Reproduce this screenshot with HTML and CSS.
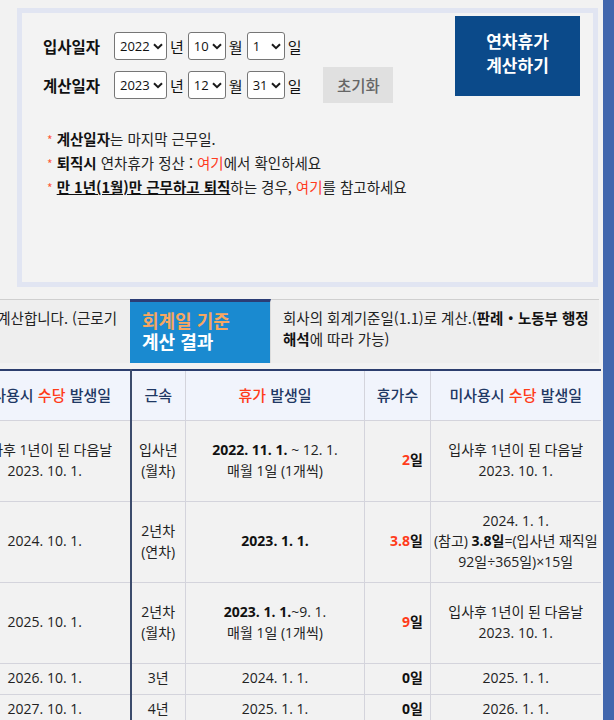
FILE: index.html
```html
<!DOCTYPE html>
<html lang="ko">
<head>
<meta charset="utf-8">
<title>연차휴가 계산기</title>
<link rel="stylesheet" href="styles.css">
</head>
<body>
<div class="main">
  <section class="panel">
    <div class="panel-top">
      <div class="form">
        <div class="row">
          <span class="label">입사일자</span>
          <span class="sel-wrap sel-year"><select class="sel"><option>2022</option></select><svg class="chev" width="10" height="7" viewBox="0 0 10 7"><path d="M1 1.2 L5 5.2 L9 1.2" fill="none" stroke="#1a1a1a" stroke-width="2"/></svg></span><span class="unit">년</span>
          <span class="sel-wrap sel-small"><select class="sel"><option>10</option></select><svg class="chev" width="10" height="7" viewBox="0 0 10 7"><path d="M1 1.2 L5 5.2 L9 1.2" fill="none" stroke="#1a1a1a" stroke-width="2"/></svg></span><span class="unit">월</span>
          <span class="sel-wrap sel-small"><select class="sel"><option>1</option></select><svg class="chev" width="10" height="7" viewBox="0 0 10 7"><path d="M1 1.2 L5 5.2 L9 1.2" fill="none" stroke="#1a1a1a" stroke-width="2"/></svg></span><span class="unit">일</span>
        </div>
        <div class="row">
          <span class="label">계산일자</span>
          <span class="sel-wrap sel-year"><select class="sel"><option>2023</option></select><svg class="chev" width="10" height="7" viewBox="0 0 10 7"><path d="M1 1.2 L5 5.2 L9 1.2" fill="none" stroke="#1a1a1a" stroke-width="2"/></svg></span><span class="unit">년</span>
          <span class="sel-wrap sel-small"><select class="sel"><option>12</option></select><svg class="chev" width="10" height="7" viewBox="0 0 10 7"><path d="M1 1.2 L5 5.2 L9 1.2" fill="none" stroke="#1a1a1a" stroke-width="2"/></svg></span><span class="unit">월</span>
          <span class="sel-wrap sel-small"><select class="sel"><option>31</option></select><svg class="chev" width="10" height="7" viewBox="0 0 10 7"><path d="M1 1.2 L5 5.2 L9 1.2" fill="none" stroke="#1a1a1a" stroke-width="2"/></svg></span><span class="unit">일</span>
          <button class="reset">초기화</button>
        </div>
      </div>
      <button class="calc-btn">연차휴가<br>계산하기</button>
    </div>
    <ul class="notes">
      <li><span class="star">*</span> <b>계산일자</b>는 마지막 근무일.</li>
      <li><span class="star">*</span> <b>퇴직시</b> 연차휴가 정산 : <span class="link">여기</span>에서 확인하세요</li>
      <li><span class="star">*</span> <b class="ul">만 1년(1월)만 근무하고 퇴직</b>하는 경우, <span class="link">여기</span>를 참고하세요</li>
    </ul>
  </section>

  <div class="tabs">
    <div class="tab-left"><span>입사일 기준으로 계산합니다. (근로기</span></div>
    <div class="tab-active"><span class="orange">회계일 기준</span><br>계산 결과</div>
    <div class="tab-right">회사의 회계기준일(1.1)로 계산.(<b>판례・노동부 행정<br>해석</b>에 따라 가능)</div>
  </div>

  <table class="result">
    <colgroup>
      <col class="c1"><col class="c2"><col class="c3"><col class="c4"><col class="c5">
    </colgroup>
    <thead>
      <tr>
        <th class="thick">미사용시 <span class="red">수당</span> 발생일</th>
        <th>근속</th>
        <th><span class="red">휴가</span> 발생일</th>
        <th>휴가수</th>
        <th>미사용시 <span class="red">수당</span> 발생일</th>
      </tr>
    </thead>
    <tbody>
      <tr class="tall">
        <td class="thick">입사후 1년이 된 다음날<br>2023. 10. 1.</td>
        <td>입사년<br>(월차)</td>
        <td><b>2022. 11. 1.</b> ~ 12. 1.<br>매월 1일 (1개씩)</td>
        <td class="num"><span class="red">2</span>일</td>
        <td>입사후 1년이 된 다음날<br>2023. 10. 1.</td>
      </tr>
      <tr class="tall">
        <td class="thick">2024. 10. 1.</td>
        <td>2년차<br>(연차)</td>
        <td><b>2023. 1. 1.</b></td>
        <td class="num"><span class="red">3.8</span>일</td>
        <td class="tight">2024. 1. 1.<br>(참고) <b>3.8일</b>=(입사년 재직일<br>92일÷365일)×15일</td>
      </tr>
      <tr class="tall">
        <td class="thick">2025. 10. 1.</td>
        <td>2년차<br>(월차)</td>
        <td><b>2023. 1. 1.</b>~9. 1.<br>매월 1일 (1개씩)</td>
        <td class="num"><span class="red">9</span>일</td>
        <td>입사후 1년이 된 다음날<br>2023. 10. 1.</td>
      </tr>
      <tr class="short">
        <td class="thick">2026. 10. 1.</td>
        <td>3년</td>
        <td>2024. 1. 1.</td>
        <td class="num">0일</td>
        <td>2025. 1. 1.</td>
      </tr>
      <tr class="short">
        <td class="thick">2027. 10. 1.</td>
        <td>4년</td>
        <td>2025. 1. 1.</td>
        <td class="num">0일</td>
        <td>2026. 1. 1.</td>
      </tr>
    </tbody>
  </table>
</div>
<div class="sidebar"></div>
</body>
</html>
```

FILE: styles.css
```css
* { box-sizing: border-box; }

html, body {
  margin: 0;
  padding: 0;
  height: 720px;
  overflow: hidden;
}

body {
  display: flex;
  background: #f2f2f2;
  font-family: "Open Sans", "Noto Sans CJK KR", sans-serif;
  color: #222;
}

.main {
  width: 603px;
  flex: none;
  overflow: hidden;
  padding-top: 8px;
}

.sidebar {
  width: 11px;
  flex: none;
  background: #4267ad;
}

/* ---------- top panel ---------- */
.panel {
  margin-left: 17px;
  width: 581px;
  height: 279px;
  border: 5px solid #e1e5f2;
  background: #f3f3f3;
}

.panel-top {
  display: flex;
  justify-content: space-between;
  align-items: flex-start;
}

.form {
  padding-left: 21px;
  padding-top: 19px;
}

.row {
  display: flex;
  align-items: center;
  height: 28px;
}

.row + .row { margin-top: 11px; }

.label {
  width: 71px;
  font-family: "Noto Sans CJK KR", sans-serif;
  font-weight: 700;
  font-size: 15.5px;
  color: #111;
}

.sel-wrap {
  position: relative;
  display: inline-flex;
  height: 28px;
  flex: none;
}

.sel-year { width: 53px; }
.sel-small { width: 38px; }

.sel {
  -webkit-appearance: none;
  appearance: none;
  width: 100%;
  height: 28px;
  margin: 0;
  padding: 0 0 0 5px;
  font-family: "Open Sans", "Noto Sans CJK KR", sans-serif;
  font-size: 13px;
  color: #111;
  background: #fff;
  border: 1px solid #767676;
  border-radius: 3px;
}

.chev {
  position: absolute;
  right: 4px;
  top: 11px;
  pointer-events: none;
}

.unit {
  margin: 0 4px 0 3px;
  font-family: "Noto Sans CJK KR", sans-serif;
  font-size: 15px;
  color: #111;
}

.reset {
  margin-left: 18px;
  width: 70px;
  height: 36px;
  flex: none;
  border: none;
  background: #e0e0e0;
  color: #666;
  font-family: "Noto Sans CJK KR", sans-serif;
  font-size: 15.5px;
  font-weight: 500;
  padding: 0;
}

.calc-btn {
  margin-top: 3px;
  margin-right: 13px;
  width: 125px;
  height: 80px;
  border: none;
  background: #0b4a8a;
  color: #fff;
  font-family: "Noto Sans CJK KR", sans-serif;
  font-weight: 700;
  font-size: 17px;
  line-height: 24px;
  padding: 0 0 7px;
}

.notes {
  list-style: none;
  margin: 28px 0 0;
  padding: 0 0 0 25px;
  font-family: "Noto Sans CJK KR", sans-serif;
  font-size: 14.5px;
  line-height: 23px;
  color: #222;
}

.notes b { color: #111; }
.star { color: #ff5a3c; font-size: 12px; }
.link { color: #ff3c1e; }
.ul { text-decoration: underline; }

/* ---------- tabs ---------- */
.tabs {
  margin-top: 12px;
  width: 599px;
  height: 64px;
  display: flex;
  background: #eeeeee;
  border-top: 1px solid #cfcfcf;
  font-family: "Noto Sans CJK KR", sans-serif;
  font-size: 14.5px;
  line-height: 21px;
}

.tab-left {
  width: 130px;
  flex: none;
  display: flex;
  justify-content: flex-end;
  padding: 7px 13px 0 0;
  white-space: nowrap;
  color: #222;
}

.tab-active {
  width: 141px;
  flex: none;
  margin-top: -1px;
  height: 64px;
  background: #1a8ad0;
  border-top: 3px solid #2b3d75;
  border-right: 1px solid #dcdcdc;
  padding: 8px 0 0 12px;
  color: #fff;
  font-weight: 700;
  font-size: 18px;
  line-height: 21px;
}

.orange { color: #f7a760; }

.tab-right {
  flex: 1;
  padding: 7px 0 0 12px;
  color: #222;
  white-space: nowrap;
}

.tab-right b { color: #111; }

/* ---------- table ---------- */
.result {
  margin-top: 6px;
  margin-left: -41px;
  width: 641px;
  border-collapse: collapse;
  table-layout: fixed;
  border-top: 2px solid #2c3e6e;
  font-size: 14px;
  line-height: 20.5px;
}

.c1 { width: 171px; }
.c2 { width: 55px; }
.c3 { width: 179px; }
.c4 { width: 66px; }
.c5 { width: 170px; }

th, td {
  border: 1px solid #d4d4dc;
  text-align: center;
  vertical-align: middle;
  padding: 0 2px;
  white-space: nowrap;
  overflow: hidden;
}

th {
  height: 50px;
  background: #f1f4fc;
  color: #1f3864;
  font-family: "Noto Sans CJK KR", sans-serif;
  font-weight: 500;
  font-size: 15px;
}

td {
  background: #f2f2f2;
  color: #222;
}

td.tight { padding: 0; }

th:last-child, td:last-child { border-right: none; }

.thick { border-right: 2px solid #3c4b6c; }

.tall td { height: 81px; }
.short td { height: 31px; }

td b { color: #111; }

.num {
  text-align: right;
  padding-right: 7px;
  font-weight: 700;
  color: #111;
}

.red { color: #ff3c1a; }
```
